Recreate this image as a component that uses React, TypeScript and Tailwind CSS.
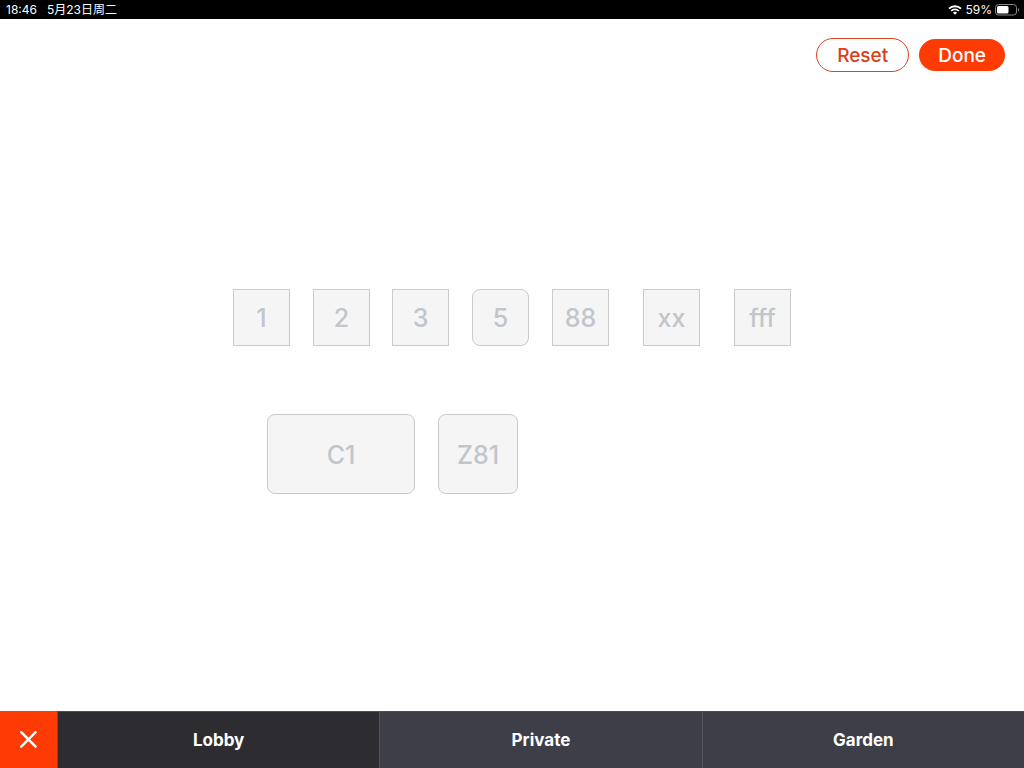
import React, { useState } from 'react';

type Table = {
	name: string;
	x: number;
	y: number;
	width: number;
	height: number;
	rounded?: boolean;
};

// Positions are relative to the top left corner of the floor plan
const tables: Table[] = [
	{ name: '1', x: 0, y: 0, width: 57, height: 57 },
	{ name: '2', x: 80, y: 0, width: 57, height: 57 },
	{ name: '3', x: 159, y: 0, width: 57, height: 57 },
	{ name: '5', x: 239, y: 0, width: 57, height: 57, rounded: true },
	{ name: '88', x: 319, y: 0, width: 57, height: 57 },
	{ name: 'xx', x: 410, y: 0, width: 57, height: 57 },
	{ name: 'fff', x: 501, y: 0, width: 57, height: 57 },
	{ name: 'C1', x: 34, y: 125, width: 148, height: 80, rounded: true },
	{ name: 'Z81', x: 205, y: 125, width: 80, height: 80, rounded: true },
];

const areas = ['Lobby', 'Private', 'Garden'];

const planWidth = Math.max(...tables.map((t) => t.x + t.width));
const planHeight = Math.max(...tables.map((t) => t.y + t.height));

const WifiIcon = () => (
	<svg width="14" height="10" viewBox="0 0 14 10" fill="none" stroke="white">
		<path d="M1 3.7a8.6 8.6 0 0 1 12 0" strokeWidth="1.8" />
		<path d="M3.2 6a5.4 5.4 0 0 1 7.6 0" strokeWidth="1.7" />
		<path d="M7 9.8 4.9 7.7a3 3 0 0 1 4.2 0z" fill="white" stroke="none" />
	</svg>
);

const BatteryIcon = () => (
	<svg width="25" height="12" viewBox="0 0 25 12" fill="none">
		<rect x="0.5" y="0.5" width="21" height="10.5" rx="3" stroke="#8a8a8a" />
		<rect x="2" y="2" width="11.5" height="7.5" rx="1.5" fill="white" />
		<path d="M23 4v3.6c1.6-.6 1.6-3 0-3.6z" fill="#8a8a8a" />
	</svg>
);

const StatusBar = () => (
	<div className="flex h-[19px] items-center justify-between bg-black pl-1.5 pr-1 text-[12px] leading-none text-white">
		<div className="flex gap-2.5">
			<span>18:46</span>
			<span>5月23日周二</span>
		</div>
		<div className="flex items-center gap-[3px]">
			<WifiIcon />
			<span>59%</span>
			<BatteryIcon />
		</div>
	</div>
);

const App = () => {
	const [activeArea, setActiveArea] = useState<string>('Lobby');

	return (
		<div className="flex min-h-screen flex-col bg-white font-['Inter','Noto_Sans_CJK_SC',sans-serif]">
			<StatusBar />
			<header className="flex items-center justify-end gap-2.5 pr-[19px] pt-[19px]">
				<button className="h-[34px] rounded-full border border-[#d9431f] px-5 text-[19px] font-medium leading-none text-[#dc3f18]">
					Reset
				</button>
				<button className="h-8 rounded-full bg-[#ff3b05] px-[19px] text-[19px] font-medium leading-none text-white">
					Done
				</button>
			</header>

			<main className="flex flex-1 items-center justify-center">
				<div
					className="relative"
					style={{ width: planWidth, height: planHeight }}
				>
					{tables.map((table) => (
						<button
							key={table.name}
							className={`absolute border border-[#c8cacc] bg-[#f5f5f5] pt-0.5 text-[25px] font-medium leading-none text-[#c1c6cb] ${
								table.rounded ? 'rounded-lg' : ''
							}`}
							style={{
								left: table.x,
								top: table.y,
								width: table.width,
								height: table.height,
							}}
						>
							{table.name}
						</button>
					))}
				</div>
			</main>

			<nav className="flex h-[57px] bg-[#3d3e47] text-white">
				<button
					aria-label="Close"
					className="flex w-[57px] items-center justify-center bg-[#ff3b05]"
				>
					<svg
						width="19"
						height="19"
						viewBox="0 0 19 19"
						stroke="white"
						strokeWidth="2.4"
						strokeLinecap="round"
					>
						<path d="M2.2 2.2l14.4 14.4M16.6 2.2L2.2 16.6" />
					</svg>
				</button>
				{areas.map((area) => (
					<button
						key={area}
						onClick={() => setActiveArea(area)}
						className={`flex-1 border-l border-t border-l-[#53545c] border-t-[#4a4b53] pt-px text-[17px] font-bold ${
							area === activeArea ? 'bg-[#2d2c31]' : 'bg-[#3d3e47]'
						}`}
					>
						{area}
					</button>
				))}
			</nav>
		</div>
	);
};

export default App;
